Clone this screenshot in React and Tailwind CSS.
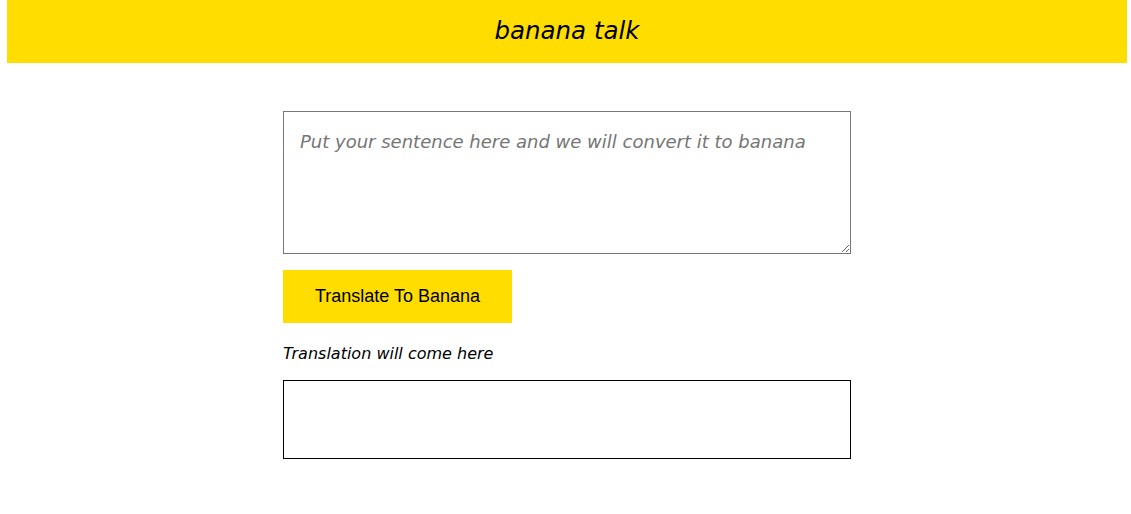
export default function App() {
  return (
    <div className="w-[1131px] h-[514px] bg-white" style={{}}>
      <div className="ml-[7px] w-[1120px]">
        <header className="h-[63px] bg-[#ffdd00] flex items-center justify-center">
          <h1 className="text-[24.5px] italic text-black font-['DejaVu_Sans',sans-serif] leading-none pb-[1px]">banana talk</h1>
        </header>
        <main className="mx-auto w-[568px] pt-[48px] flex flex-col">
          <textarea
            className="block w-[568px] h-[143px] border border-[#767676] px-[16px] py-[16px] text-[18px] italic font-['DejaVu_Sans',sans-serif] placeholder:text-[#757575] text-black outline-none"
            placeholder="Put your sentence here and we will convert it to banana"
          />
          <button className="mt-[16px] w-[229px] h-[53px] bg-[#ffdd00] text-black text-[18px] font-['Liberation_Sans',Arial,sans-serif] flex items-center justify-center">
            Translate To Banana
          </button>
          <p className="mt-[19px] text-[16px] italic text-black font-['DejaVu_Sans',sans-serif] leading-[24px]">Translation will come here</p>
          <div className="mt-[14px] w-[568px] h-[79px] border border-black"></div>
        </main>
      </div>
    </div>
  );
}
